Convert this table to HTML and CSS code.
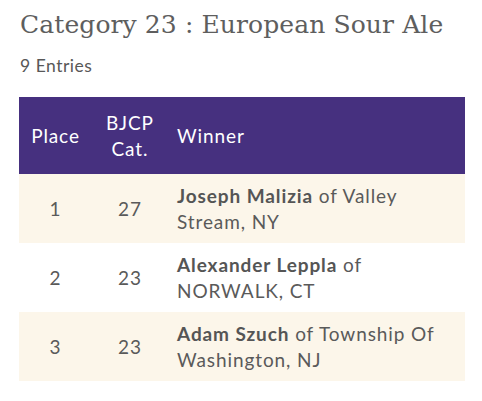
FILE: index.html
```html
<!DOCTYPE html>
<html>
<head>
<meta charset="utf-8">
<link rel="stylesheet" href="styles.css">
</head>
<body>
<div class="page">
  <h1 class="title">Category 23 : European Sour Ale</h1>
  <p class="entries">9 Entries</p>
  <table class="results">
    <thead>
      <tr class="head">
        <th class="c-place">Place</th>
        <th class="c-cat">BJCP<br>Cat.</th>
        <th class="c-win">Winner</th>
      </tr>
    </thead>
    <tbody>
      <tr class="odd">
        <td class="c-place">1</td>
        <td class="c-cat">27</td>
        <td class="c-win"><b>Joseph Malizia</b> <span>of Valley</span><br><span>Stream, NY</span></td>
      </tr>
      <tr class="even">
        <td class="c-place">2</td>
        <td class="c-cat">23</td>
        <td class="c-win"><b>Alexander Leppla</b> <span>of</span><br><span>NORWALK, CT</span></td>
      </tr>
      <tr class="odd">
        <td class="c-place">3</td>
        <td class="c-cat">23</td>
        <td class="c-win"><b>Adam Szuch</b> <span>of Township Of</span><br><span>Washington, NJ</span></td>
      </tr>
    </tbody>
  </table>
</div>
</body>
</html>
```
FILE: styles.css
```css
html, body {
  margin: 0;
  padding: 0;
  background: #ffffff;
}
.page {
  padding: 7px 17px 0 19px;
  color: #5a5a5a;
  font-family: "Lato", "Open Sans", sans-serif;
}
.title {
  margin: 0 0 0 1px;
  font-family: "DejaVu Serif", serif;
  font-weight: 400;
  font-size: 25px;
  line-height: 36px;
  color: #5e5e5e;
  letter-spacing: 0.1px;
}
.entries {
  margin: 12px 0 0 1px;
  font-size: 17.5px;
  line-height: 22px;
  letter-spacing: 0.5px;
  color: #585858;
}
.results {
  margin-top: 20px;
  width: 446px;
  border-collapse: collapse;
  table-layout: fixed;
  font-size: 19px;
  line-height: 26px;
  letter-spacing: 0.9px;
}
.c-place { width: 71px; text-align: center; }
.c-cat { width: 74px; text-align: center; }
.c-win { text-align: left; padding-left: 9px; padding-right: 14px; }
.head {
  background: #46307f;
  color: #ffffff;
  height: 77px;
}
.head th {
  font-weight: 400;
  vertical-align: middle;
}
.results td {
  vertical-align: middle;
  color: #5a5a5a;
}
.results tbody tr { height: 69px; }
.odd { background: #fcf6ea; }
.even { background: #ffffff; }
.results b {
  font-weight: 700;
  color: #555555;
}
```
